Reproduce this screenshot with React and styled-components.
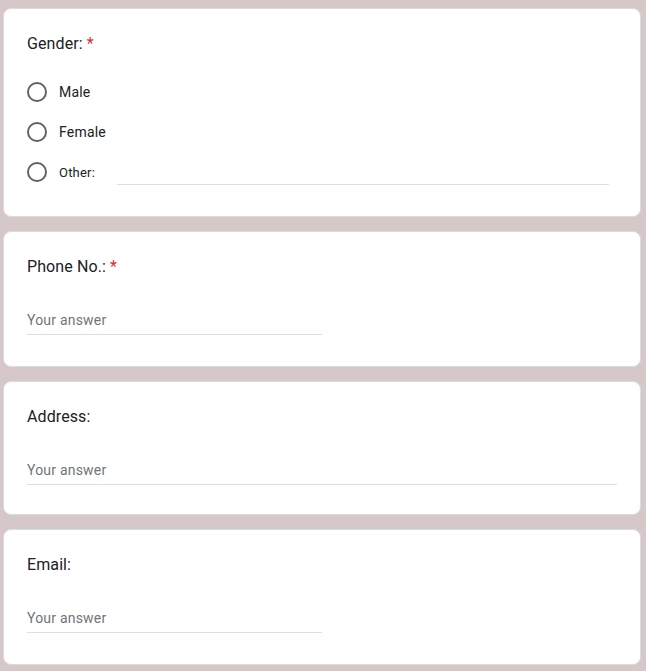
import styled, { createGlobalStyle } from 'styled-components';

const GlobalStyle = createGlobalStyle`
  html, body {
    margin: 0;
    padding: 0;
    background-color: #d6c8c8;
    font-family: Roboto, Arial, sans-serif;
  }
`;

const Page = styled.div`
  display: flex;
  flex-direction: column;
  gap: 14px;
  padding: 8px 5px 8px 3px;
`;

const Card = styled.div`
  background: #ffffff;
  border: 1px solid #dadce0;
  border-radius: 8px;
  padding: 23px 23px ${(p) => p.$bottom || 31}px 23px;
`;

const Title = styled.div`
  font-size: 16px;
  line-height: 24px;
  letter-spacing: 0.1px;
  color: #202124;
`;

const Star = styled.span`
  color: #d93025;
  margin-left: 4px;
`;

const RadioList = styled.div`
  margin-top: 16px;
  display: flex;
  flex-direction: column;
`;

const RadioRow = styled.label`
  display: flex;
  align-items: center;
  height: 40px;
`;

const Circle = styled.span`
  box-sizing: border-box;
  width: 20px;
  height: 20px;
  border: 2px solid #5f6368;
  border-radius: 50%;
  flex-shrink: 0;
`;

const RadioLabel = styled.span`
  margin-left: 12px;
  font-size: ${(p) => (p.$small ? 13 : 14)}px;
  letter-spacing: 0.2px;
  color: #202124;
`;

const OtherInput = styled.input`
  flex: 1;
  margin: 0 8px 0 22px;
  height: 24px;
  border: none;
  border-bottom: 1px solid #e0e0e0;
  outline: none;
  background: transparent;
  font-family: inherit;
  font-size: 14px;
  padding: 0;
`;

const Answer = styled.input`
  display: block;
  box-sizing: content-box;
  width: ${(p) => (p.$full ? '100%' : '50%')};
  margin-top: 25px;
  height: 20px;
  padding: 6px 0 4px 0;
  border: none;
  border-bottom: 1px solid #e0e0e0;
  outline: none;
  background: transparent;
  font-family: inherit;
  font-size: 14px;
  line-height: 20px;
  letter-spacing: 0.2px;
  color: #202124;

  &::placeholder {
    color: #70757a;
    opacity: 1;
  }
`;

const genders = ['Male', 'Female'];

function TextQuestion({ title, required, full, bottom }) {
  return (
    <Card $bottom={bottom}>
      <Title>
        {title}
        {required && <Star>*</Star>}
      </Title>
      <Answer type="text" placeholder="Your answer" $full={full} />
    </Card>
  );
}

export default function App() {
  return (
    <>
      <GlobalStyle />
      <Page>
        <Card $bottom={24}>
          <Title>
            Gender:<Star>*</Star>
          </Title>
          <RadioList>
            {genders.map((g) => (
              <RadioRow key={g}>
                <Circle />
                <RadioLabel>{g}</RadioLabel>
              </RadioRow>
            ))}
            <RadioRow>
              <Circle />
              <RadioLabel $small>Other:</RadioLabel>
              <OtherInput type="text" />
            </RadioRow>
          </RadioList>
        </Card>
        <TextQuestion title="Phone No.:" required />
        <TextQuestion title="Address:" full bottom={29} />
        <TextQuestion title="Email:" />
      </Page>
    </>
  );
}
